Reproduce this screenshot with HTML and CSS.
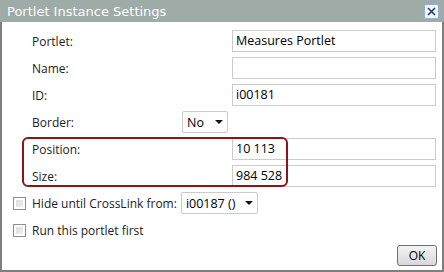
FILE: index.html
```html
<!DOCTYPE html>
<html lang="en">
<head>
	<meta charset="UTF-8">
	<title>Portlet Instance Settings</title>
	<link rel="stylesheet" href="styles.css">
</head>
<body>
	<div class="dialog">
		<div class="titlebar">
			<span class="title">Portlet Instance Settings</span>
			<span class="close">
				<svg width="11" height="11" viewBox="0 0 11 11"><path d="M2 2 L9 9 M9 2 L2 9" stroke="#1d3c73" stroke-width="1.6" fill="none"/></svg>
			</span>
		</div>
		<div class="body">
			<div class="row">
				<label class="label">Portlet:</label>
				<div class="input">Measures Portlet</div>
			</div>
			<div class="row">
				<label class="label">Name:</label>
				<div class="input"></div>
			</div>
			<div class="row">
				<label class="label">ID:</label>
				<div class="input">i00181</div>
			</div>
			<div class="row">
				<label class="label short">Border:</label>
				<div class="select border-select">No<span class="arrow"></span></div>
			</div>
			<div class="row">
				<label class="label">Position:</label>
				<div class="input">10 113</div>
			</div>
			<div class="row">
				<label class="label">Size:</label>
				<div class="input">984 528</div>
			</div>
			<div class="check-row">
				<span class="checkbox"></span>
				<span class="check-label">Hide until CrossLink from:</span>
				<div class="select link-select">i00187 ()<span class="arrow"></span></div>
			</div>
			<div class="check-row">
				<span class="checkbox"></span>
				<span class="check-label">Run this portlet first</span>
			</div>
			<div class="footer">
				<button class="ok">OK</button>
			</div>
			<div class="highlight"></div>
		</div>
	</div>
</body>
</html>
```
FILE: styles.css
```css
*{
	margin: 0;
	padding: 0;
	box-sizing: border-box;
}
body{
	width: 444px;
	height: 272px;
	background: #fff;
	font-family: "Open Sans", "Noto Sans", sans-serif;
	font-size: 12px;
	color: #222;
}
.dialog{
	width: 444px;
	height: 272px;
	border: 2px solid #7f7f7f;
	border-top: 0;
	display: flex;
	flex-direction: column;
}
.titlebar{
	height: 22px;
	margin: 0 -2px;
	background: #9eaba6;
	display: flex;
	align-items: center;
	justify-content: space-between;
	padding: 0 5px 0 7px;
}
.title{
	font-family: "DejaVu Sans", sans-serif;
	font-size: 13px;
	color: #fff;
}
.close{
	width: 15px;
	height: 15px;
	background: #f4f8fc;
	border: 1px solid #8fb3dc;
	border-radius: 2px;
	display: flex;
	align-items: center;
	justify-content: center;
}
.body{
	position: relative;
	flex: 1;
	padding: 8px 5px 0 11px;
}
.row{
	display: flex;
	align-items: center;
	height: 22px;
	margin-bottom: 5px;
	padding-left: 19px;
}
.label{
	width: 200px;
}
.label.short{
	width: 150px;
}
.input{
	width: 204px;
	height: 22px;
	border: 1px solid #cbcbcb;
	padding: 0 3px;
	line-height: 20px;
	font-size: 12.5px;
	color: #000;
}
.select{
	height: 22px;
	border: 1px solid #cbcbcb;
	border-radius: 2px;
	padding: 0 4px;
	display: flex;
	align-items: center;
	justify-content: space-between;
	font-size: 12.5px;
	color: #000;
}
.border-select{
	width: 46px;
}
.link-select{
	width: 77px;
	margin-left: 4px;
}
.arrow{
	width: 0;
	height: 0;
	border-left: 4px solid transparent;
	border-right: 4px solid transparent;
	border-top: 4px solid #111;
}
.check-row{
	display: flex;
	align-items: center;
	height: 22px;
	margin-bottom: 5px;
}
.checkbox{
	width: 13px;
	height: 13px;
	border: 1px solid #8e8f8f;
	background: linear-gradient(135deg, #d8d8d8, #f4f4f4);
	box-shadow: inset 0 0 0 2px #fff;
	margin-right: 6px;
}
.footer{
	display: flex;
	justify-content: flex-end;
	margin-top: -1px;
}
.ok{
	width: 40px;
	height: 21px;
	border: 1px solid #707070;
	border-radius: 3px;
	background: linear-gradient(#f3f3f3, #e6e6e6 50%, #d8d8d8);
	font-family: "Open Sans", sans-serif;
	font-size: 12px;
	color: #000;
}
.highlight{
	position: absolute;
	left: 20px;
	top: 115px;
	width: 266px;
	height: 50px;
	border: 2px solid #8b1414;
	border-radius: 6px;
}
```
